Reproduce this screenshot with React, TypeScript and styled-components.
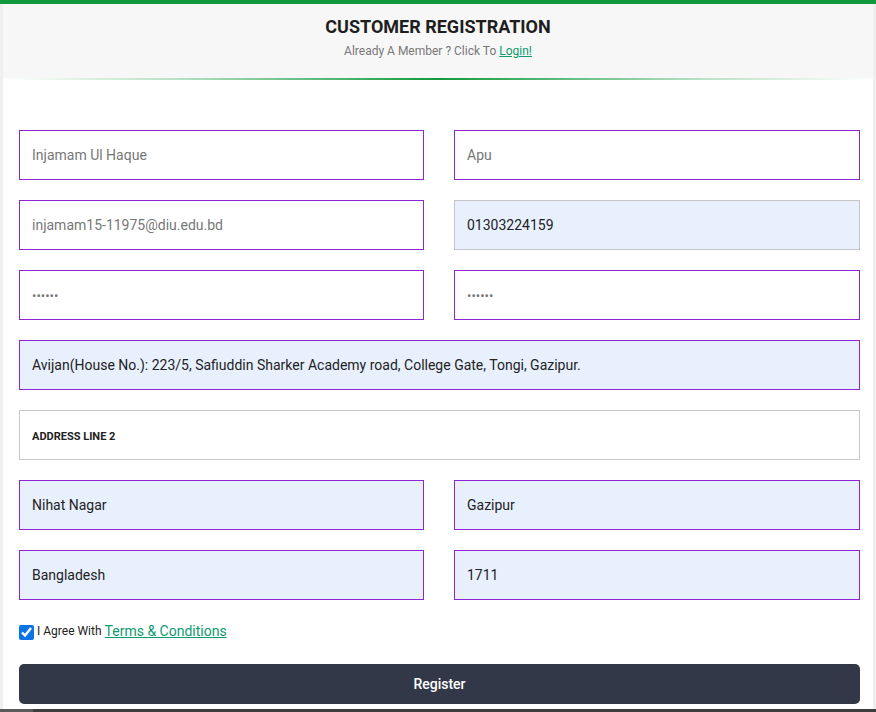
import styled, { createGlobalStyle } from "styled-components";

const GlobalStyle = createGlobalStyle`
  html, body {
    margin: 0;
    padding: 0;
    background: #efefef;
    font-family: Roboto, "Noto Sans", Arial, sans-serif;
  }
  * { box-sizing: border-box; }
`;

const Page = styled.div`
  display: flex;
  flex-direction: column;
  height: 712px;
  overflow: hidden;
`;

const TopBar = styled.div`
  height: 4px;
  background: #109a3c;
  flex-shrink: 0;
`;

const Card = styled.div`
  flex: 1;
  margin: 0 3px;
  background: #fff;
  display: flex;
  flex-direction: column;
  min-height: 0;
`;

const Header = styled.div`
  background: #f7f7f7;
  height: 74px;
  display: flex;
  flex-direction: column;
  align-items: center;
  padding-top: 12px;
`;

const HeaderLine = styled.div`
  height: 2px;
  background: linear-gradient(
    to right,
    rgba(16, 154, 60, 0) 0%,
    rgba(16, 154, 60, 0.3) 20%,
    #109a3c 50%,
    rgba(16, 154, 60, 0.3) 80%,
    rgba(16, 154, 60, 0) 100%
  );
`;

const Title = styled.h1`
  margin: 0;
  font-size: 18px;
  font-weight: 700;
  color: #1e1e1e;
  line-height: 22px;
`;

const Sub = styled.p`
  margin: 6px 0 0;
  font-size: 12px;
  color: #777;
  line-height: 15px;
`;

const GreenLink = styled.a<{ $size?: number }>`
  color: #0d9a70;
  text-decoration: underline;
  font-size: ${({ $size }) => ($size ? `${$size}px` : "inherit")};
  cursor: pointer;
`;

const Form = styled.form`
  padding: 50px 13px 0 16px;
  display: flex;
  flex-direction: column;
  gap: 20px;
`;

const Row = styled.div`
  display: grid;
  grid-template-columns: 405px 406px;
  column-gap: 30px;
`;

const Field = styled.input<{ $filled?: boolean; $plain?: boolean; $secret?: boolean }>`
  height: 50px;
  width: 100%;
  padding: 0 12px;
  font-family: inherit;
  font-size: 14px;
  color: #222;
  outline: none;
  border: 1px solid ${({ $plain }) => ($plain ? "#c4c4c4" : "#8f26d6")};
  background: ${({ $filled }) => ($filled ? "#e8f0fe" : "#fff")};
  &::placeholder {
    color: #777;
    font-size: ${({ $secret }) => ($secret ? "13px" : "14px")};
  }
`;

const Label = styled.input`
  height: 50px;
  width: 100%;
  padding: 0 12px;
  font-family: inherit;
  border: 1px solid #c8c8c8;
  outline: none;
  background: #fff;
  &::placeholder {
    font-size: 11px;
    font-weight: 700;
    color: #222;
    text-transform: uppercase;
  }
`;

const Agree = styled.label`
  display: flex;
  align-items: center;
  font-size: 12px;
  color: #222;
  margin-top: 2px;
  gap: 3px;
  line-height: 16px;
`;

const Check = styled.input`
  width: 15px;
  height: 15px;
  margin: 3px 0 0;
  accent-color: #0b74e5;
`;

const Button = styled.button`
  height: 40px;
  border: none;
  border-radius: 5px;
  background: #323848;
  color: #fff;
  font-family: inherit;
  font-size: 14px;
  font-weight: 500;
  margin-top: 4px;
  cursor: pointer;
`;

const BottomBar = styled.div`
  height: 3px;
  flex-shrink: 0;
  background: linear-gradient(to right, #5a5a5a 0 33px, #3e3e3e 33px);
`;

export default function App() {
  return (
    <Page>
      <GlobalStyle />
      <TopBar />
      <Card>
        <Header>
          <Title>CUSTOMER REGISTRATION</Title>
          <Sub>
            Already A Member ? Click To <GreenLink>Login!</GreenLink>
          </Sub>
        </Header>
        <HeaderLine />
        <Form onSubmit={(e) => e.preventDefault()}>
          <Row>
            <Field placeholder="Injamam Ul Haque" />
            <Field placeholder="Apu" />
          </Row>
          <Row>
            <Field placeholder="injamam15-11975@diu.edu.bd" />
            <Field $filled $plain defaultValue="01303224159" />
          </Row>
          <Row>
            <Field $secret placeholder="••••••" />
            <Field $secret placeholder="••••••" />
          </Row>
          <Field
            $filled
            defaultValue="Avijan(House No.): 223/5, Safiuddin Sharker Academy road, College Gate, Tongi, Gazipur."
          />
          <Label placeholder="Address Line 2" />
          <Row>
            <Field $filled defaultValue="Nihat Nagar" />
            <Field $filled defaultValue="Gazipur" />
          </Row>
          <Row>
            <Field $filled defaultValue="Bangladesh" />
            <Field $filled defaultValue="1711" />
          </Row>
          <Agree>
            <Check type="checkbox" defaultChecked />
            I Agree With <GreenLink $size={14}>Terms &amp; Conditions</GreenLink>
          </Agree>
          <Button type="submit">Register</Button>
        </Form>
      </Card>
      <BottomBar />
    </Page>
  );
}
